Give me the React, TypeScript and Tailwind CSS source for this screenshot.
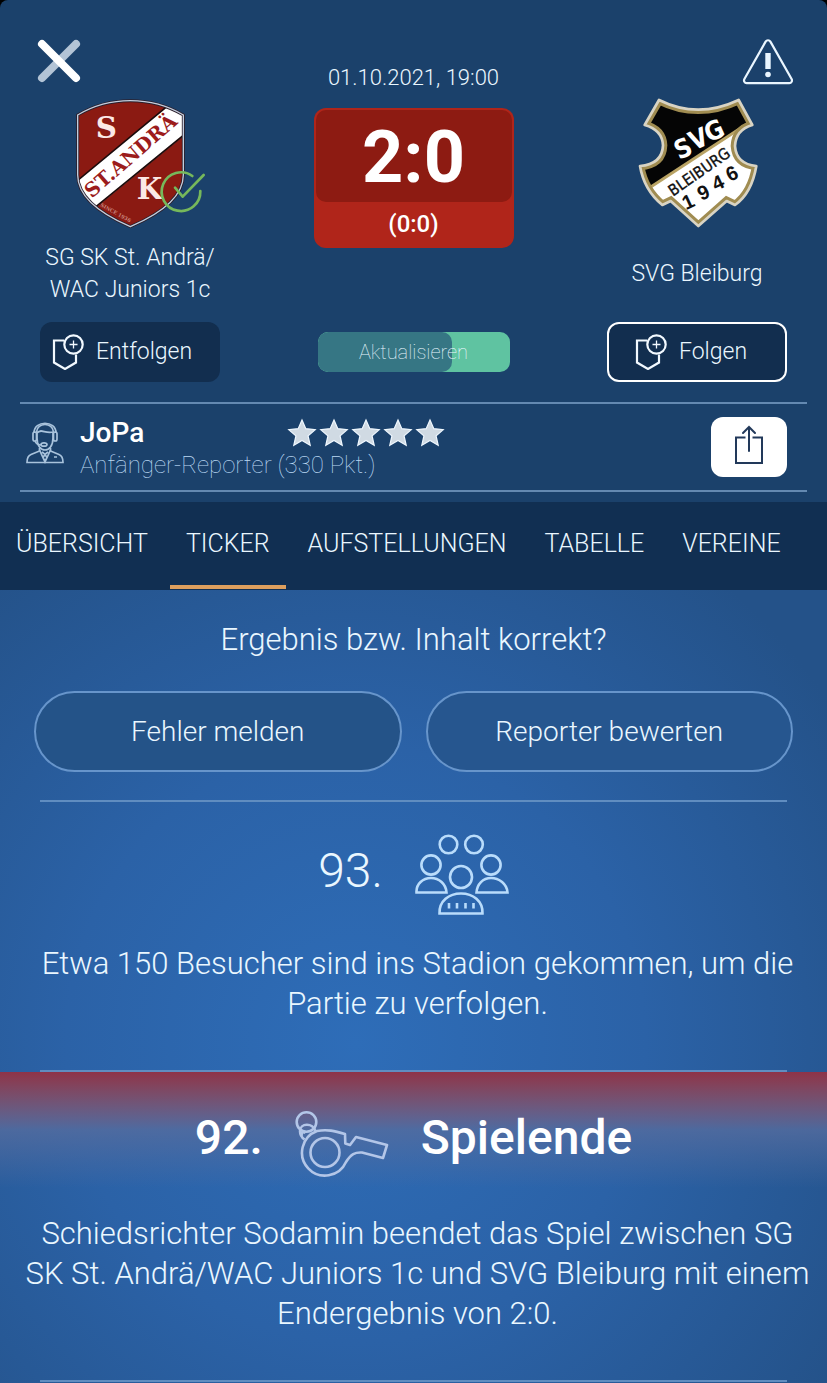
import React, { useState } from "react";

const tabs = ["ÜBERSICHT", "TICKER", "AUFSTELLUNGEN", "TABELLE", "VEREINE"];

const CloseIcon = () => (
  <svg width="52" height="48" viewBox="0 0 52 48" strokeWidth="8" strokeLinecap="round">
    <path d="M42 8 8 42" stroke="#b3c4d6" />
    <path d="M8 8l34 34" stroke="#fff" />
  </svg>
);

const WarningIcon = () => (
  <svg width="52" height="50" viewBox="0 0 52 50" fill="none">
    <path
      d="M22.600 5.600a2.8 2.8 0 0 1 4.8 0L48.600 43a2.8 2.8 0 0 1-2.3 4.2H3.700A2.8 2.8 0 0 1 1.400 43Z"
      transform="translate(2 0)"
      stroke="#eaf6ff"
      strokeWidth="2.200"
    />
    <path d="M24.300 17h5.400v16h-5.400z" fill="#eaf6ff" />
    <circle cx="27" cy="38.500" r="2.800" fill="#eaf6ff" />
  </svg>
);

const AndraeCrest = () => (
  <svg width="160" height="136" viewBox="150 282 480 408" role="img" aria-label="St. Andrä">
    <defs>
      <clipPath id="andrae">
        <path d="M233 345Q305 302 391 302Q478 302 550 345V525Q550 612 391 680Q233 612 233 525Z" />
      </clipPath>
    </defs>
    <g clipPath="url(#andrae)">
      <rect x="220" y="290" width="340" height="400" fill="#8b1a12" />
      <path d="M225 548 505 316 560 350V400L288 622 230 600Z" fill="#fff" />
      <path d="M225 548 505 316M560 398 288 620" stroke="#1c0b0b" strokeWidth="5" />
    </g>
    <path
      d="M233 345Q305 302 391 302Q478 302 550 345V525Q550 612 391 680Q233 612 233 525Z"
      fill="none"
      stroke="#2b1f2b"
      strokeWidth="9"
    />
    <path
      d="M233 345Q305 302 391 302Q478 302 550 345V525Q550 612 391 680Q233 612 233 525Z"
      fill="none"
      stroke="#c3cddd"
      strokeWidth="4"
    />
    <g fontFamily="DejaVu Serif, serif" fontWeight="bold">
      <text x="287" y="413" fontSize="88" fill="#fbe9e6">S</text>
      <text x="410" y="597" fontSize="88" fill="#fbe9e6">K</text>
      <text x="275" y="596" fontSize="59" fill="#9c1c1c" transform="rotate(-41 275 596)">ST.ANDRÄ</text>
      <text x="300" y="618" fontSize="15" fill="#c98880" transform="rotate(29 300 618)">SINCE 1936</text>
    </g>
    <g fill="none" stroke="#76b85b" strokeWidth="8" strokeLinecap="round" strokeLinejoin="round">
      <path d="M577 528A58 58 0 1 0 601 573" />
      <path d="M525 563l23 27 63-65" />
    </g>
  </svg>
);

const BleiburgCrest = () => (
  <svg width="160" height="136" viewBox="54 222 480 408" role="img" aria-label="SVG Bleiburg">
    <defs>
      <clipPath id="bleiburg">
        <path d="M180 240Q296 298 419 240L460 315Q410 330 408 378Q412 432 472 438Q458 520 408 555L383 543 298 618 215 543 190 555Q135 510 123 438Q190 432 192 376Q190 330 137 315Z" />
      </clipPath>
    </defs>
    <g clipPath="url(#bleiburg)">
      <rect x="110" y="230" width="370" height="400" fill="#fff" />
      <path d="M110 230H480V288L110 530Z" fill="#050505" />
      <path d="M120 524 470 295" stroke="#b9a364" strokeWidth="9" />
    </g>
    <path
      d="M180 240Q296 298 419 240L460 315Q410 330 408 378Q412 432 472 438Q458 520 408 555L383 543 298 618 215 543 190 555Q135 510 123 438Q190 432 192 376Q190 330 137 315Z"
      fill="none"
      stroke="#a08c51"
      strokeWidth="26"
      clipPath="url(#bleiburg)"
    />
    <path
      d="M180 240Q296 298 419 240L460 315Q410 330 408 378Q412 432 472 438Q458 520 408 555L383 543 298 618 215 543 190 555Q135 510 123 438Q190 432 192 376Q190 330 137 315Z"
      fill="none"
      stroke="#d9d4c4"
      strokeWidth="8"
      strokeLinejoin="round"
    />
    <g fontFamily="Liberation Sans Narrow, DejaVu Sans Condensed, sans-serif">
      <g fontSize="78" fontWeight="bold" fill="#fff">
        <text x="240" y="420" transform="rotate(-24 240 420)">S</text>
        <text x="284" y="392" transform="rotate(-24 284 392)">V</text>
        <text x="330" y="368" transform="rotate(-24 330 368)">G</text>
      </g>
      <text x="222" y="530" fontSize="47" fill="#111" stroke="#111" transform="rotate(-35 222 530)">
        BLEIBURG
      </text>
    </g>
    <g fontFamily="Liberation Sans, sans-serif" fontSize="60" fontWeight="bold" fill="#111">
      <text x="261" y="571" transform="rotate(-25 261 571)">1</text>
      <text x="307" y="543" transform="rotate(-25 307 543)">9</text>
      <text x="350" y="514" transform="rotate(-25 350 514)">4</text>
      <text x="392" y="486" transform="rotate(-25 392 486)">6</text>
    </g>
  </svg>
);

const FollowIcon = () => (
  <svg width="32" height="36" viewBox="0 0 32 36" fill="none" stroke="#f2f9ff" strokeWidth="2.200">
    <path d="M12 6.500H2v22l11 6.500L24 28.500v-8" />
    <circle cx="21.500" cy="10.500" r="9.200" />
    <path d="M17.500 10.500h8M21.500 6.500v8" strokeWidth="1.300" />
  </svg>
);

const ReporterIcon = () => (
  <svg width="38" height="42" viewBox="0 0 38 42" fill="none" stroke="#a9c3dc" strokeWidth="1.700">
    <path d="M8 11C8-2 30-2 30 11" />
    <path d="M10.500 10C11 0 27 0 27.500 10M11 11c4-5 8 1 16-1v6c0 8-4 12-8 12s-8-4-8-12z" />
    <rect x="7" y="10" width="3.500" height="9" rx="1.700" />
    <rect x="27.500" y="10" width="3.500" height="9" rx="1.700" />
    <path d="M9 19c1 3 4 4 7 4" />
    <ellipse cx="18" cy="22.500" rx="3" ry="1.700" />
    <path d="M13.500 26v3L5 32.500c-3 1.200-4 4-4 8h36c0-4-1-6.800-4-8L24.500 29v-3" />
    <path d="M13.500 28 19 40l5.500-12M16 30l3 2.500 3-2.500M19 32.500l-2 3 2 4 2-4zM28 35h3" />
  </svg>
);

const Star = () => (
  <svg width="30" height="30" viewBox="0 0 30 30">
    <path
      d="M15 2l3.800 8.700 9.400.9-7.100 6.300 2.100 9.400-8.200-4.900-8.200 4.900 2.100-9.400-7.100-6.300 9.400-.9z"
      fill="#d0dae3"
      stroke="#f0f8ff"
      strokeWidth="1.200"
    />
  </svg>
);

const ShareIcon = () => (
  <svg width="28" height="40" viewBox="0 0 28 40" fill="none" stroke="#22395a" strokeWidth="2">
    <path d="M10.500 12.500H1V38h26V12.500h-9.500" />
    <path d="M14 26V2M8 8l6-6 6 6" strokeLinecap="round" />
  </svg>
);

const AudienceIcon = () => (
  <svg width="94" height="82" viewBox="0 0 94 82" fill="none" stroke="#b9dcfb" strokeWidth="2.600">
    <circle cx="33.500" cy="10.500" r="8.800" />
    <circle cx="59" cy="10.500" r="8.800" />
    <circle cx="16" cy="31" r="9.600" />
    <circle cx="76" cy="31" r="9.600" />
    <circle cx="46" cy="43" r="11" />
    <path d="M1.500 58.500C1 50 8 44 16 44s15 6 15.500 14.500zM61.500 58.500C62 50 68 44 76 44s16 6 16.500 14.500z" />
    <path d="M24.500 79.500C24 67 34 59.500 46 59.500S68 67 67.500 79.500z" />
    <path d="M34 69v5.500M42 69v5.500M50.500 69v5.500M58.500 69v5.500" />
  </svg>
);

const WhistleIcon = () => (
  <svg width="94" height="68" viewBox="0 0 94 68" fill="none" stroke="#b3c6e8" strokeWidth="2.600">
    <circle cx="11.500" cy="12" r="9.800" />
    <path d="M9.500 29.500C6 27 5 24 5 21c0-8 13-9 15.500.5M10.500 23c-2-2-5 0-3.500 3" />
    <path
      d="M50 24C40 21 32 19 22 21A23 23 0 1 0 51 52C56 44 60 42 67 42.500L88 48l4-13-31-8-6 8-4.700-1.500z"
      strokeLinejoin="round"
    />
    <circle cx="30" cy="42.500" r="14.500" />
  </svg>
);

const App = () => {
  const [activeTab, setActiveTab] = useState("TICKER");

  return (
    <div className="min-h-screen bg-black font-['Roboto','Liberation_Sans',sans-serif] font-light text-[#eaf7ff]">
      <header className="rounded-t-lg bg-[#1b416b] pt-9 pb-2.5">
        <div className="flex h-[58px] items-start justify-between px-[34px]">
          <button aria-label="Schließen">
            <CloseIcon />
          </button>
          <time className="self-end text-[22px] leading-8">01.10.2021, 19:00</time>
          <button aria-label="Warnung">
            <WarningIcon />
          </button>
        </div>

        <div className="flex items-start justify-between px-10">
          <div className="flex w-[180px] flex-col items-center">
            <AndraeCrest />
            <h2 className="mt-3 flex h-16 items-center text-center text-[23px] leading-8">
              SG SK St. Andrä/
              <br />
              WAC Juniors 1c
            </h2>
          </div>
          <div className="mt-3.5 w-[200px] rounded-xl bg-[#b0251a] p-0.5 text-center text-white">
            <div className="rounded-[10px] bg-[#8d1b12] pt-1 text-7xl leading-[88px] font-bold">2:0</div>
            <div className="text-2xl leading-[44px] font-medium">(0:0)</div>
          </div>
          <div className="flex w-[180px] flex-col items-center">
            <BleiburgCrest />
            <h2 className="mt-3 flex h-16 items-center text-[23px] leading-8">SVG Bleiburg</h2>
          </div>
        </div>

        <div className="mt-4 flex items-center justify-between px-10">
          <button className="flex h-[60px] w-[180px] items-center gap-3 rounded-xl bg-[#122e4f] pl-3 text-[23px]">
            <FollowIcon />
            Entfolgen
          </button>
          <button className="relative h-10 w-48 overflow-hidden rounded-[10px] bg-[#5fc3a1] text-xl font-thin">
            <span className="absolute inset-y-0 left-0 w-[134px] rounded-[10px] bg-[#367684]" />
            <span className="relative">Aktualisieren</span>
          </button>
          <button className="flex h-[60px] w-[180px] items-center justify-center gap-3 rounded-xl border-2 border-white bg-[#122e4f] pr-3 text-[23px]">
            <FollowIcon />
            Folgen
          </button>
        </div>

        <div className="mx-5 mt-5 flex h-[90px] items-center border-y-2 border-[#6489b1] pr-5 pl-1.5">
          <div className="mb-2">
            <ReporterIcon />
          </div>
          <div className="ml-4 flex-1 pt-1">
            <div className="flex items-center">
              <h3 className="w-[207px] text-[28px] leading-8 font-medium text-white">JoPa</h3>
              <div className="flex gap-0.5" role="img" aria-label="5 Sterne">
                {[1, 2, 3, 4, 5].map((n) => (
                  <Star key={n} />
                ))}
              </div>
            </div>
            <p className="text-2xl leading-8 font-thin text-[#bcd9f4]">Anfänger-Reporter (330 Pkt.)</p>
          </div>
          <button
            aria-label="Teilen"
            className="flex h-[60px] w-[76px] items-center justify-center rounded-xl bg-white pb-1"
          >
            <ShareIcon />
          </button>
        </div>
      </header>

      <nav className="flex h-[88px] gap-1.5 overflow-hidden bg-[#112f52] pb-px">
        {tabs.map((tab) => (
          <button
            key={tab}
            onClick={() => setActiveTab(tab)}
            className={`border-b-4 px-4 text-[25px] ${
              activeTab === tab ? "border-[#dd9f5e]" : "border-transparent"
            }`}
          >
            {tab}
          </button>
        ))}
      </nav>

      <main className="bg-[radial-gradient(ellipse_70%_75%_at_43%_57%,#2e6db8_0%,#2b62a7_50%,#245289_100%)] pb-1">
        <section className="mx-[34px] pt-7">
          <p className="text-center text-[31px] leading-[44px]">Ergebnis bzw. Inhalt korrekt?</p>
          <div className="mt-7 grid grid-cols-2 gap-6 pt-px">
            <button className="h-[81px] rounded-full border-2 border-[#6795cb] bg-[#245388] text-[28px]">
              Fehler melden
            </button>
            <button className="h-[81px] rounded-full border-2 border-[#6795cb] bg-[#26568f] text-[28px]">
              Reporter bewerten
            </button>
          </div>
        </section>

        <article className="mt-7">
          <hr className="mx-10 border-t-2 border-[#608dc0]" />
          <div className="flex h-[142px] items-center justify-center gap-8 pt-1">
            <span className="pb-2 text-5xl">93.</span>
            <AudienceIcon />
          </div>
          <p className="pr-3 pb-[46px] pl-5 text-center text-[31px] leading-10">
            Etwa 150 Besucher sind ins Stadion gekommen, um die Partie zu verfolgen.
          </p>
        </article>

        <article>
          <hr className="mx-10 border-t-2 border-[#608dc0]" />
          <div className="flex h-[116px] items-center justify-center gap-8 bg-linear-to-b from-[#8e3348] via-[#556c9e]/80 to-transparent pt-4 text-5xl font-medium text-white">
            <span>92.</span>
            <div className="pt-3">
              <WhistleIcon />
            </div>
            <h2>Spielende</h2>
          </div>
          <p className="pt-[26px] pr-3 pb-[46px] pl-5 text-center text-[31px] leading-10">
            Schiedsrichter Sodamin beendet das Spiel zwischen SG SK St. Andrä/WAC Juniors 1c und SVG
            Bleiburg mit einem Endergebnis von 2:0.
          </p>
          <hr className="mx-10 border-t-2 border-[#608dc0]" />
        </article>
      </main>
    </div>
  );
};

export default App;
